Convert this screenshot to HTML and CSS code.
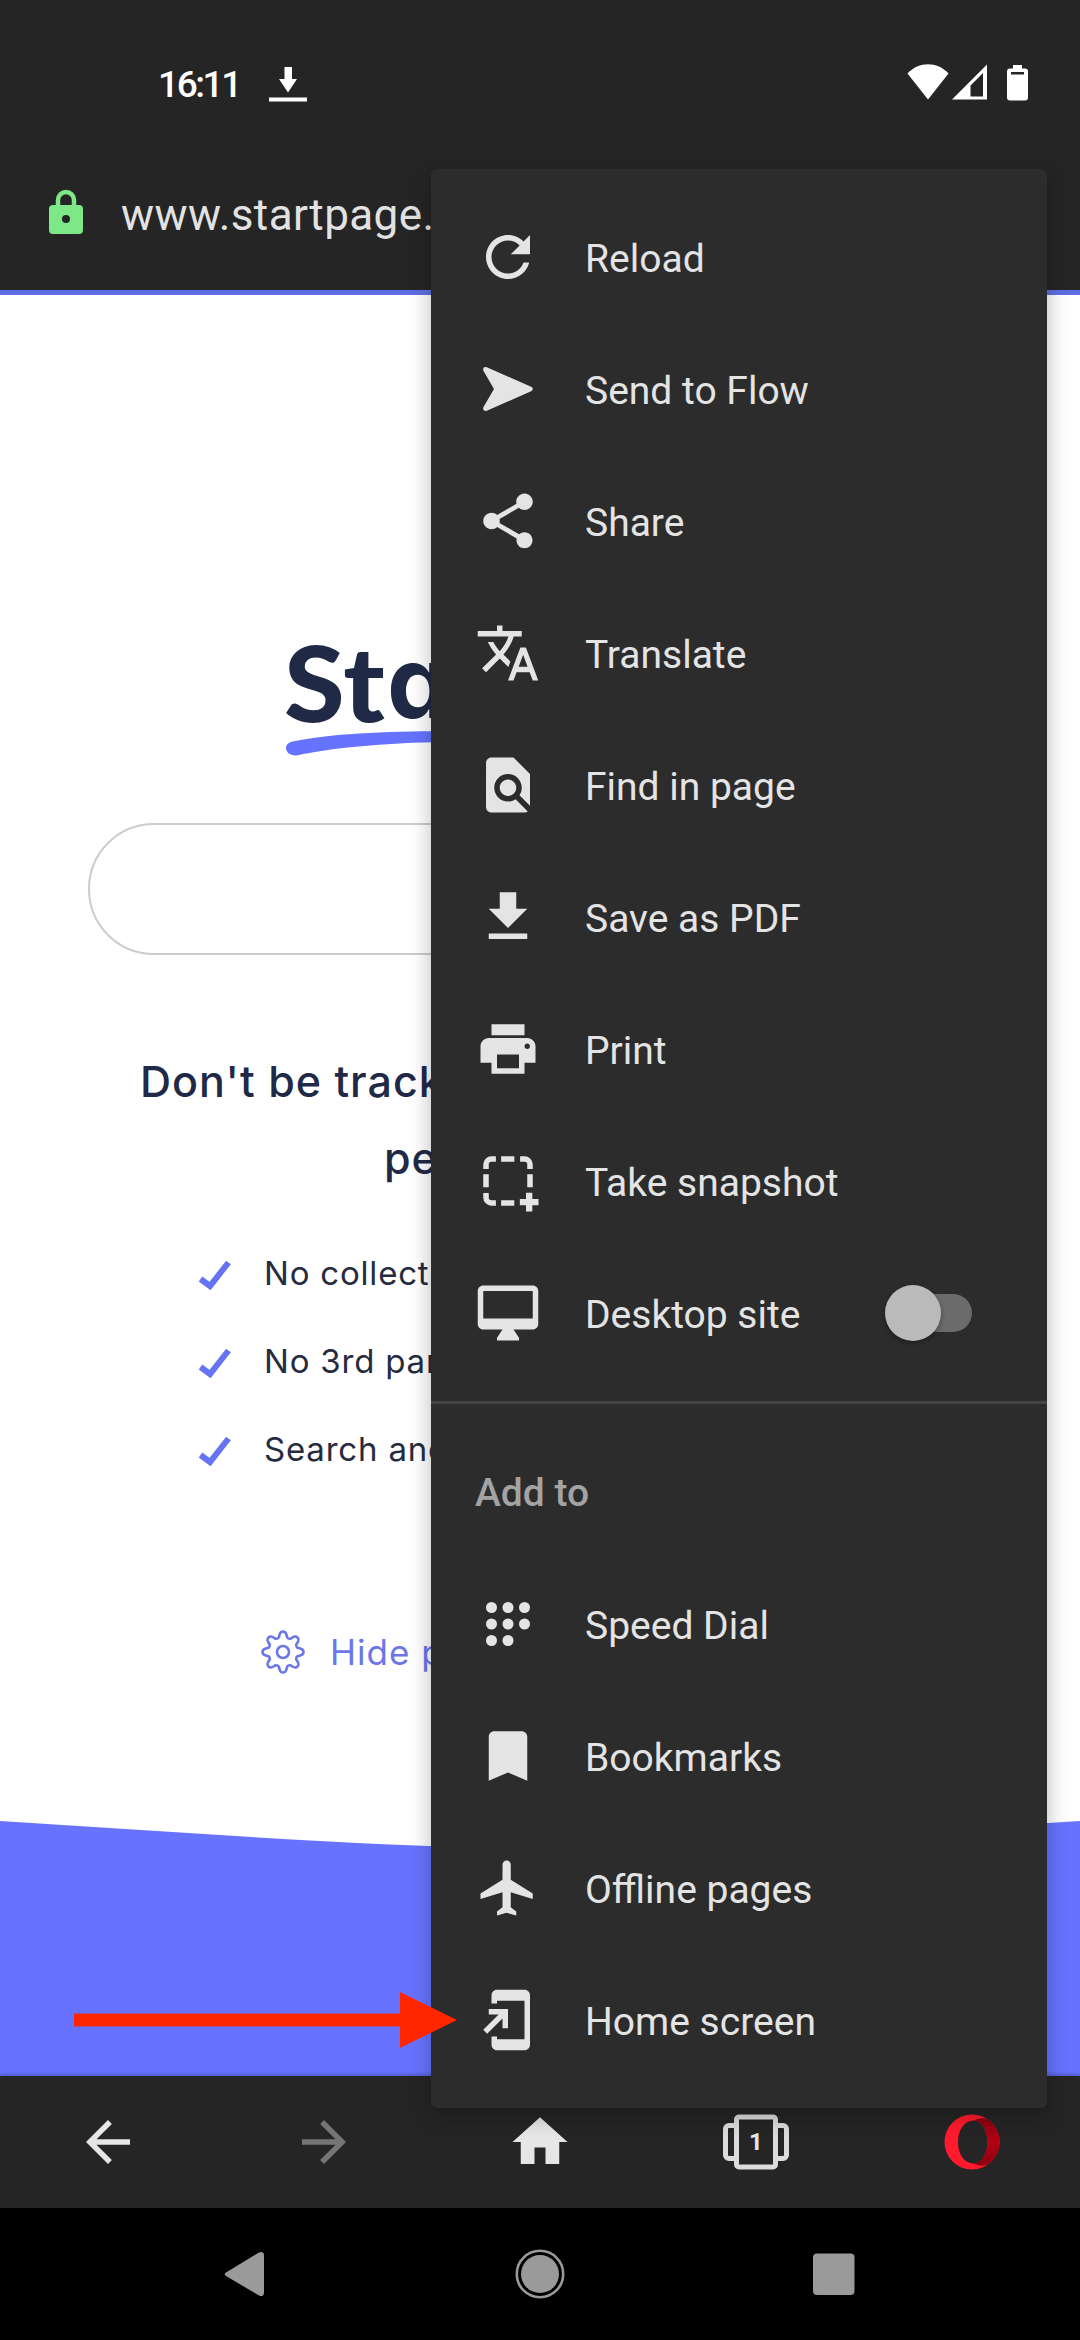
FILE: index.html
```html
<!DOCTYPE html>
<html lang="en">
<head>
<meta charset="utf-8">
<title>Startpage</title>
<link rel="stylesheet" href="styles.css">
</head>
<body>
<div class="screen">
  <header class="status">
    <span class="clock">16:11</span>
    <svg class="status-download" width="38" height="36" viewBox="0 0 38 36"><path d="M15.500 1h7.500v12h5L19 26.500 10 13h5.500zM0 31.500h38V35.500H0z"/></svg>
    <svg class="status-signal" width="122" height="38" viewBox="0 0 122 38">
      <path d="M21 36.500 0.500 10.500C12-1.800 30-1.800 41.500 10.500z"/>
      <path fill-rule="evenodd" d="M45 36.500 80 1.500V36.500zM63.500 33.500H76V10L63.500 22.500z"/>
      <path fill-rule="evenodd" d="M106 2h9v3.500h3a3 3 0 0 1 3 3V34.500a3 3 0 0 1-3 3H103a3 3 0 0 1-3-3V8.500a3 3 0 0 1 3-3h3zM104 9v2.500h13V9z"/>
    </svg>
  </header>

  <div class="address">
    <svg class="lock" width="36" height="46" viewBox="0 0 36 46">
      <path d="M10 18V11a8 8 0 0 1 16 0v7" fill="none" stroke="#7ee787" stroke-width="4.500"/>
      <path fill-rule="evenodd" d="M5 16H31a4 4 0 0 1 4 4V41a4 4 0 0 1-4 4H5a4 4 0 0 1-4-4V20a4 4 0 0 1 4-4zM18 26a4 4 0 1 0 0 8 4 4 0 0 0 0-8z"/>
    </svg>
    <span class="url">www.startpage.</span>
  </div>

  <main class="page">
    <div class="logo">
      <div class="wordmark"><span class="wordmark-st">St</span><span class="wordmark-a">a</span></div>
      <svg class="swoosh" width="510" height="26" viewBox="0 0 510 26"><path d="M6.500 10.500C60-1 150-1 255 1.500V11.500C150 8.500 65 13 10.500 24.500 -1 25.500-4 12.500 6.500 10.500z"/></svg>
    </div>
    <div class="search"></div>
    <div class="headline"><div class="line-one">Don't be track</div><div class="line-two">pe</div></div>
    <ul class="benefits">
      <li><svg class="check" width="34" height="32" viewBox="0 0 34 32"><path d="M2.500 20 12 27 30.500 3.500"/></svg>No collect</li>
      <li><svg class="check" width="34" height="32" viewBox="0 0 34 32"><path d="M2.500 20 12 27 30.500 3.500"/></svg>No 3rd par</li>
      <li><svg class="check" width="34" height="32" viewBox="0 0 34 32"><path d="M2.500 20 12 27 30.500 3.500"/></svg>Search and</li>
    </ul>
    <div class="hide">
      <svg class="gear" width="44" height="44" viewBox="-22 -22 44 44"><circle r="6"/><path d="M-4.200-14.500C-3.200-18-3.500-20.500 0-20.500S3.200-18 4.200-14.500Q5-13 7.300-13.200C10.500-15 12-17 14.500-14.500S15-10.500 13.200-7.300Q13-5 14.500-4.200C18-3.200 20.500-3.500 20.500 0S18 3.200 14.500 4.200Q13 5 13.200 7.300C15 10.500 17 12 14.500 14.500S10.500 15 7.300 13.200Q5 13 4.200 14.500C3.200 18 3.500 20.500 0 20.500S-3.200 18-4.200 14.500Q-5 13-7.300 13.200C-10.500 15-12 17-14.500 14.500S-15 10.500-13.200 7.300Q-13 5-14.500 4.200C-18 3.200-20.500 3.500-20.500 0S-18-3.200-14.500-4.200Q-13-5-13.200-7.300C-15-10.500-17-12-14.500-14.500S-10.500-15-7.300-13.200Q-5-13-4.200-14.500z"/></svg>
      <span>Hide p</span>
    </div>
    <svg class="wave" width="1080" height="255" viewBox="0 0 1080 255"><path d="M0 0 200 12.800C320 20.500 430 27 540 27S760 20.500 880 12.800L1080 0V255H0z"/></svg>
  </main>

  <nav class="toolbar">
    <svg class="icon" viewBox="0 0 24 24"><path d="M20 11H7.830l5.590-5.590L12 4l-8 8 8 8 1.410-1.410L7.830 13H20v-2z"/></svg>
    <svg class="icon dim" viewBox="0 0 24 24"><path d="M12 4l-1.410 1.410L16.170 11H4v2h12.170l-5.580 5.590L12 20l8-8z"/></svg>
    <svg class="icon" viewBox="0 0 24 24"><path d="M10 20v-6h4v6h5v-8h3L12 3 2 12h3v8z"/></svg>
    <div class="tabs">
      <svg width="66" height="66" viewBox="0 0 66 66"><path d="M11 16.500H6a3.500 3.500 0 0 0-3.500 3.500V46A3.500 3.500 0 0 0 6 49.500H11M55 16.500H60a3.500 3.500 0 0 1 3.500 3.500V46a3.500 3.500 0 0 1-3.500 3.500H55"/><rect x="13.500" y="8" width="39" height="50" rx="2.500"/></svg>
      <span>1</span>
    </div>
    <svg class="icon" viewBox="0 0 66 66">
      <defs><linearGradient id="ring" x1="0" y1="0" x2="0" y2="1"><stop offset="0" stop-color="#8a0010"/><stop offset=".5" stop-color="#b50014"/><stop offset="1" stop-color="#8a0010"/></linearGradient></defs>
      <path fill="#ff1b2d" fill-rule="evenodd" d="M33 5.500a27.500 27.500 0 1 0 0 55 27.500 27.500 0 1 0 0-55zM34.500 11.500C43 11.500 48.500 21 48.500 33S43 54.500 34.500 54.500 19 46 19 33 26 11.500 34.500 11.500z"/>
      <path fill="url(#ring)" d="M34.500 11.500C43 7.500 50 9.500 53 14 58 19 60.500 26 60.500 33S58 47 53 52C50 56.500 43 58.500 34.500 54.500 43 54.500 48.500 45 48.500 33S43 11.500 34.500 11.500z"/>
    </svg>
  </nav>

  <footer class="system">
    <svg width="66" height="66" viewBox="0 0 66 66"><path d="M13 31.500 46 11.500Q50.500 9.500 51 14V52Q50.500 56.500 46 54.500L13 35Q10.500 33 13 31.500z"/></svg>
    <svg width="66" height="66" viewBox="0 0 66 66"><circle cx="33" cy="33" r="19"/><circle cx="33" cy="33" r="23.200" fill="none" stroke="#9a9a9a" stroke-width="2.600"/></svg>
    <svg width="66" height="66" viewBox="0 0 66 66"><rect x="12" y="12.500" width="41.500" height="41.500" rx="4"/></svg>
  </footer>

  <aside class="menu">
    <div class="row"><svg class="icon" viewBox="0 0 24 24"><path d="M17.650 6.350C16.200 4.900 14.210 4 12 4c-4.420 0-7.990 3.580-7.990 8s3.570 8 7.990 8c3.730 0 6.840-2.550 7.730-6h-2.080c-.82 2.330-3.040 4-5.650 4-3.310 0-6-2.690-6-6s2.690-6 6-6c1.660 0 3.140.69 4.220 1.780L13 11h7V4l-2.350 2.350z"/></svg><span>Reload</span></div>
    <div class="row"><svg class="icon" viewBox="0 0 24 24"><path d="M4.300 4.050 20.400 11.200Q21.700 12 20.400 12.800L4.300 19.950Q2.600 20.300 3.050 18.600L6.900 12 3.050 5.400Q2.600 3.700 4.300 4.050z"/></svg><span>Send to Flow</span></div>
    <div class="row"><svg class="icon" viewBox="0 0 24 24"><path d="M18 16.080c-.76 0-1.440.3-1.960.77L8.910 12.700c.05-.23.09-.46.09-.7s-.04-.47-.09-.7l7.050-4.110c.54.5 1.250.81 2.040.81 1.660 0 3-1.340 3-3s-1.340-3-3-3-3 1.340-3 3c0 .24.040.47.090.7L8.040 9.810C7.500 9.310 6.790 9 6 9c-1.660 0-3 1.340-3 3s1.340 3 3 3c.79 0 1.500-.31 2.040-.81l7.120 4.160c-.05.21-.08.43-.08.65 0 1.610 1.310 2.920 2.920 2.920s2.920-1.310 2.920-2.920-1.310-2.920-2.920-2.920z"/></svg><span>Share</span></div>
    <div class="row"><svg class="icon" viewBox="0 0 24 24"><path d="M12.870 15.070l-2.540-2.510.03-.03c1.740-1.940 2.980-4.170 3.710-6.530H17V4h-7V2H8v2H1v1.990h11.170C11.500 7.920 10.440 9.750 9 11.350 8.070 10.320 7.300 9.190 6.690 8h-2c.73 1.630 1.730 3.170 2.980 4.560l-5.090 5.020L4 19l5-5 3.110 3.110.76-2.040zM18.500 10h-2L12 22h2l1.120-3h4.750L21 22h2l-4.500-12zm-2.620 7l1.620-4.330L19.120 17h-3.240z"/></svg><span>Translate</span></div>
    <div class="row"><svg class="icon" viewBox="0 0 24 24"><path d="M20 19.590V8l-6-6H6c-1.100 0-1.990.9-1.990 2L4 20c0 1.100.89 2 1.990 2H18c.45 0 .85-.15 1.190-.4l-4.430-4.430c-.8.52-1.740.83-2.760.83-2.760 0-5-2.240-5-5s2.240-5 5-5 5 2.240 5 5c0 1.020-.31 1.960-.83 2.750L20 19.590zM9 13c0 1.660 1.340 3 3 3s3-1.340 3-3-1.340-3-3-3-3 1.340-3 3z"/></svg><span>Find in page</span></div>
    <div class="row"><svg class="icon" viewBox="0 0 24 24"><path d="M19 9h-4V3H9v6H5l7 7 7-7zM5 18v2h14v-2H5z"/></svg><span>Save as PDF</span></div>
    <div class="row"><svg class="icon" viewBox="0 0 24 24"><path d="M19 8H5c-1.660 0-3 1.340-3 3v6h4v4h12v-4h4v-6c0-1.660-1.340-3-3-3zm-3 11H8v-5h8v5zm3-7c-.55 0-1-.45-1-1s.45-1 1-1 1 .45 1 1-.45 1-1 1zm-1-9H6v4h12V3z"/></svg><span>Print</span></div>
    <div class="row"><svg class="icon line" viewBox="0 0 24 24"><path d="M4 7.600V6a2 2 0 0 1 2-2H7.600M9.500 4h4.800M16.400 4H18a2 2 0 0 1 2 2V7.600M20 9.500v4.800M4 9.500v4.800M4 16.400V18a2 2 0 0 0 2 2H7.600M9.500 20h4.800"/><path d="M19.700 16.300v6.800M16.300 19.700h6.800" stroke-width="2.300"/></svg><span>Take snapshot</span></div>
    <div class="row"><svg class="icon" viewBox="0 0 24 24"><path d="M21 2H3c-1.100 0-2 .9-2 2v12c0 1.100.9 2 2 2h7l-2 3v1h8v-1l-2-3h7c1.100 0 2-.9 2-2V4c0-1.100-.9-2-2-2zm0 12H3V4h18v10z"/></svg><span>Desktop site</span><div class="toggle"><div class="thumb"></div></div></div>
    <div class="divider"></div>
    <div class="section">Add to</div>
    <div class="row"><svg class="icon" viewBox="0 0 24 24"><circle cx="6" cy="6" r="2"/><circle cx="12" cy="6" r="2"/><circle cx="18" cy="6" r="2"/><circle cx="6" cy="12" r="2"/><circle cx="12" cy="12" r="2"/><circle cx="18" cy="12" r="2"/><circle cx="6" cy="18" r="2"/><circle cx="12" cy="18" r="2"/></svg><span>Speed Dial</span></div>
    <div class="row"><svg class="icon" viewBox="0 0 24 24"><path d="M17 3H7c-1.100 0-1.990.9-1.990 2L5 21l7-3 7 3V5c0-1.100-.9-2-2-2z"/></svg><span>Bookmarks</span></div>
    <div class="row"><svg class="icon" viewBox="0 0 24 24"><path d="M21 16v-2l-8-5V3.500c0-.83-.67-1.500-1.500-1.500S10 2.670 10 3.500V9l-8 5v2l8-2.500V19l-2 1.500V22l3.500-1 3.500 1v-1.500L13 19v-5.500l8 2.500z"/></svg><span>Offline pages</span></div>
    <div class="row"><svg class="icon" viewBox="0 0 24 24"><path d="M18 1.010L8 1c-1.100 0-2 .9-2 2v3h2V5h10v14H8v-1H6v3c0 1.100.9 2 2 2h10c1.100 0 2-.9 2-2V3c0-1.100-.9-1.990-2-1.990zM10 15h2V8H5v2h3.590L3 15.590 4.410 17 10 11.410V15z"/></svg><span>Home screen</span></div>
  </aside>

  <svg class="pointer" width="384" height="58" viewBox="0 0 384 58"><path d="M0 22.500H326V1L383 29 326 57V35.500H0z"/></svg>
</div>
</body>
</html>
```
FILE: styles.css
```css
* { box-sizing: border-box; }
body { margin: 0; background: #000; }
svg { display: block; flex: none; }
.screen {
  position: relative;
  display: flex;
  flex-direction: column;
  width: 1080px;
  height: 2340px;
  overflow: hidden;
  font-family: Roboto, sans-serif;
}

/* status bar */
.status {
  display: flex;
  height: 140px;
  padding: 63px 51px 0 158px;
  background: #252525;
  color: #fff;
  fill: #fff;
}
.clock { width: 111px; font: 500 37px/44px Roboto, sans-serif; letter-spacing: -2.4px; }
.status-download { margin-top: 3px; }
.status-signal { margin-left: auto; }

/* address bar */
.address {
  display: flex;
  height: 155px;
  padding: 49px 0 0 48px;
  border-bottom: 5px solid #5d6ee3;
  background: #252525;
}
.lock { fill: #7ee787; }
.url { margin-left: 37px; color: #e2e2e2; font-size: 44px; line-height: 52px; letter-spacing: 0.4px; white-space: nowrap; }

/* web page */
.page { height: 1781px; background: #fff; color: #202945; font-family: Inter, sans-serif; white-space: nowrap; }
.logo { padding: 336px 0 0 286px; height: 528px; }
.wordmark { display: flex; height: 100px; line-height: 100px; }
.wordmark-st { width: 98px; margin-left: -2px; font-family: Lato, sans-serif; font-size: 105px; font-weight: 900; letter-spacing: 1px; transform: scaleX(1.05); transform-origin: left; }
.wordmark-a { margin: 1px 0 0 5px; font-family: Inter, sans-serif; font-size: 100px; font-weight: 700; font-feature-settings: "cv11"; }
.swoosh { fill: #6573ff; }
.search { height: 132px; margin: 0 88px; border: 2px solid #cbcbd2; border-radius: 66px; }
.headline { padding-top: 88px; height: 274px; font-size: 43px; font-weight: 500; line-height: 77px; letter-spacing: 1px; }
.line-one { padding-left: 140px; }
.line-two { padding-left: 384px; }
.benefits { margin: 0; padding: 0 0 0 198px; list-style: none; font-size: 33px; letter-spacing: 0.8px; color: #262b40; }
.benefits li { display: flex; align-items: center; gap: 32px; height: 88px; }
.check { fill: none; stroke: #6674f3; stroke-width: 6; margin-top: 4px; }
.hide { display: flex; align-items: center; gap: 25px; height: 88px; margin-top: 115px; padding-left: 261px; color: #6b77e8; font-size: 35px; letter-spacing: 1px; }
.gear { fill: none; stroke: #6b77e8; stroke-width: 2.600; }
.wave { margin-top: 125px; fill: #6773ff; }

/* browser toolbar */
.toolbar { position: relative; display: grid; grid-template-columns: repeat(5, 216px); place-items: center; height: 132px; background: #252525; box-shadow: 0 -1px 4px rgba(0, 0, 0, .3); fill: #e6e6e6; }
.icon { width: 66px; height: 66px; }
.dim { fill: #757575; }
.tabs { display: grid; place-items: center; }
.tabs svg, .tabs span { grid-area: 1 / 1; }
.tabs svg { fill: none; stroke: #dcdcdc; stroke-width: 5; }
.tabs span { color: #e6e6e6; font-size: 24px; font-weight: 700; }

/* system navigation */
.system { position: relative; display: flex; align-items: center; justify-content: center; gap: 228px; height: 132px; background: #000; fill: #9a9a9a; }

/* overflow menu */
.menu {
  position: absolute;
  left: 431px;
  top: 169px;
  width: 616px;
  height: 1939px;
  padding: 22px 0;
  border-radius: 6px;
  background: #2c2c2c;
  box-shadow: 0 8px 22px rgba(0, 0, 0, .28);
  color: #e4e4e4;
  fill: #e4e4e4;
  font-size: 39px;
}
.row { display: flex; align-items: center; gap: 44px; height: 132px; padding: 0 75px 0 44px; }
.row span { padding-top: 3px; }
.line { fill: none; stroke: #e4e4e4; stroke-width: 2; overflow: visible; }
.toggle { display: flex; align-items: center; width: 84px; height: 38px; margin-left: auto; border-radius: 19px; background: #6b6b6b; }
.thumb { flex: none; width: 56px; height: 56px; margin-left: -3px; border-radius: 50%; background: #bababa; box-shadow: 0 2px 5px rgba(0, 0, 0, .35); }
.divider { height: 3px; margin: 22px 0; background: #444; }
.section { height: 132px; padding-left: 44px; line-height: 135px; font-weight: 500; color: #a3a3a3; }

/* red callout arrow over the page and menu */
.pointer { position: absolute; left: 74px; top: 1991px; fill: #ff2600; }
```
